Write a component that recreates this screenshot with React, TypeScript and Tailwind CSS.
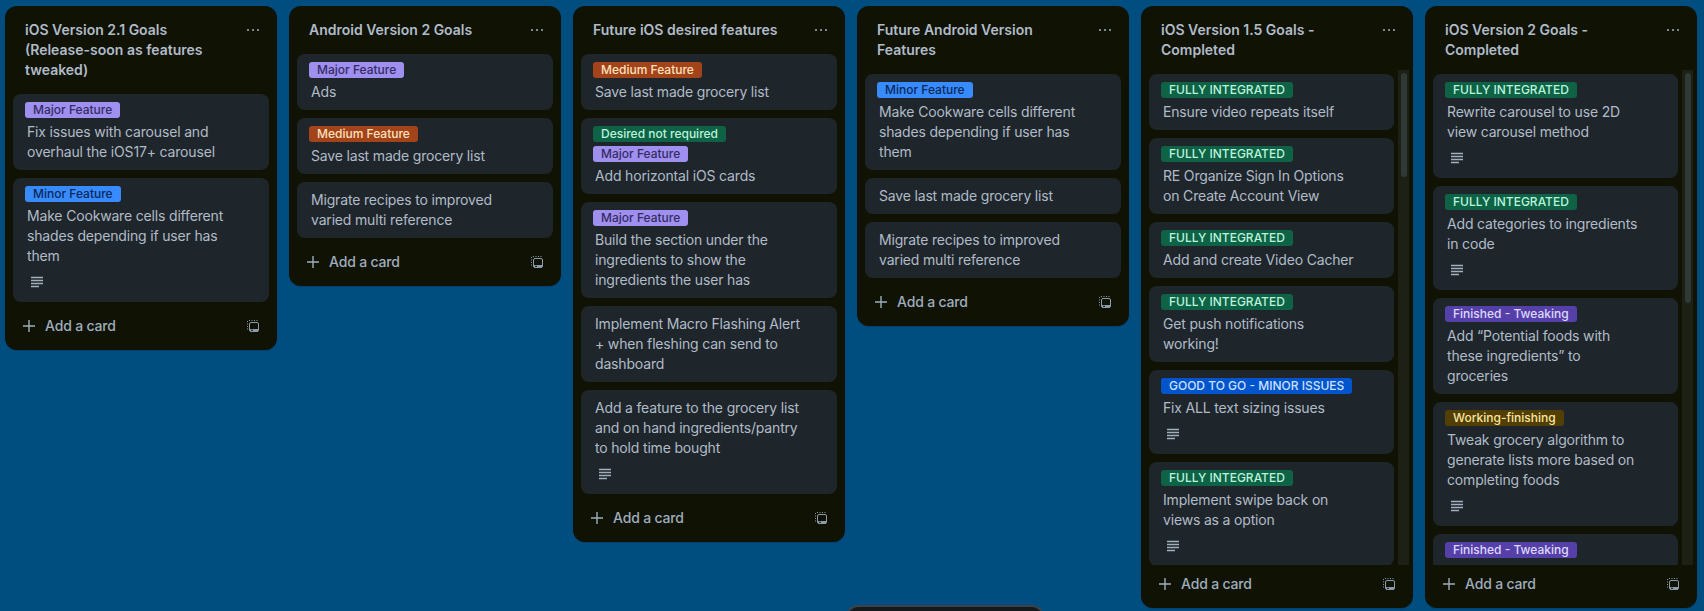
type Label = { text: string; color: string }
type Card = { labels?: Label[]; lines: string[]; desc?: boolean }
type List = { title: string[]; cards: Card[]; thumb?: string }

const major = { text: 'Major Feature', color: 'bg-[#9f8fef] text-[#352c63]' }
const minor = { text: 'Minor Feature', color: 'bg-[#388bff] text-[#092957]' }
const medium = { text: 'Medium Feature', color: 'bg-[#a3431a] text-[#ffe2bd]' }
const desired = { text: 'Desired not required', color: 'bg-[#0e6245] text-[#baf3db]' }
const full = { text: 'FULLY INTEGRATED', color: 'bg-[#0e6245] text-[#baf3db]' }
const good = { text: 'GOOD TO GO - MINOR ISSUES', color: 'bg-[#0055cc] text-[#cce0ff]' }
const tweaking = { text: 'Finished - Tweaking', color: 'bg-[#5440a8] text-[#dfd8fd]' }
const working = { text: 'Working-finishing', color: 'bg-[#533f04] text-[#f8e6a0]' }

const lists: List[] = [
  {
    title: ['iOS Version 2.1 Goals', '(Release-soon as features', 'tweaked)'],
    cards: [
      { labels: [major], lines: ['Fix issues with carousel and', 'overhaul the iOS17+ carousel'] },
      { labels: [minor], lines: ['Make Cookware cells different', 'shades depending if user has', 'them'], desc: true },
    ],
  },
  {
    title: ['Android Version 2 Goals'],
    cards: [
      { labels: [major], lines: ['Ads'] },
      { labels: [medium], lines: ['Save last made grocery list'] },
      { lines: ['Migrate recipes to improved', 'varied multi reference'] },
    ],
  },
  {
    title: ['Future iOS desired features'],
    cards: [
      { labels: [medium], lines: ['Save last made grocery list'] },
      { labels: [desired, major], lines: ['Add horizontal iOS cards'] },
      { labels: [major], lines: ['Build the section under the', 'ingredients to show the', 'ingredients the user has'] },
      { lines: ['Implement Macro Flashing Alert', '+ when fleshing can send to', 'dashboard'] },
      { lines: ['Add a feature to the grocery list', 'and on hand ingredients/pantry', 'to hold time bought'], desc: true },
    ],
  },
  {
    title: ['Future Android Version', 'Features'],
    cards: [
      { labels: [minor], lines: ['Make Cookware cells different', 'shades depending if user has', 'them'] },
      { lines: ['Save last made grocery list'] },
      { lines: ['Migrate recipes to improved', 'varied multi reference'] },
    ],
  },
  {
    title: ['iOS Version 1.5 Goals -', 'Completed'],
    thumb: 'h-[104px]',
    cards: [
      { labels: [full], lines: ['Ensure video repeats itself'] },
      { labels: [full], lines: ['RE Organize Sign In Options', 'on Create Account View'] },
      { labels: [full], lines: ['Add and create Video Cacher'] },
      { labels: [full], lines: ['Get push notifications', 'working!'] },
      { labels: [good], lines: ['Fix ALL text sizing issues'], desc: true },
      { labels: [full], lines: ['Implement swipe back on', 'views as a option'], desc: true },
    ],
  },
  {
    title: ['iOS Version 2 Goals -', 'Completed'],
    thumb: 'h-[230px]',
    cards: [
      { labels: [full], lines: ['Rewrite carousel to use 2D', 'view carousel method'], desc: true },
      { labels: [full], lines: ['Add categories to ingredients', 'in code'], desc: true },
      { labels: [tweaking], lines: ['Add “Potential foods with', 'these ingredients” to', 'groceries'] },
      { labels: [working], lines: ['Tweak grocery algorithm to', 'generate lists more based on', 'completing foods'], desc: true },
      { labels: [tweaking], lines: [] },
    ],
  },
]

function DescIcon() {
  return (
    <svg width="16" height="16" viewBox="0 0 16 16" className="text-[#a3afbd]">
      <path d="M2 2.8h12v1.4H2zM2 5.8h12v1.4H2zM2 8.8h12v1.4H2zM2 11.8h8v1.4H2z" fill="currentColor" />
    </svg>
  )
}

function DotsIcon() {
  return (
    <svg width="16" height="16" viewBox="0 0 16 16" className="mt-0.5 text-[#a3afbd]">
      <circle cx="3" cy="8" r="1" fill="currentColor" />
      <circle cx="8" cy="8" r="1" fill="currentColor" />
      <circle cx="13" cy="8" r="1" fill="currentColor" />
    </svg>
  )
}

function PlusIcon() {
  return (
    <svg width="16" height="16" viewBox="0 0 16 16" fill="none">
      <path d="M8 2v12M2 8h12" stroke="currentColor" strokeWidth="1.4" />
    </svg>
  )
}

function TemplateIcon() {
  return (
    <svg width="16" height="16" viewBox="0 0 16 16" fill="none" className="text-[#8c9bab]">
      <path d="M2.5 3v1M2.5 5.5v1M2.5 8v1M2.5 10.5v1M4 2.5h1M6.5 2.5h1M9 2.5h1M11.5 2.5h1" stroke="currentColor" />
      <rect x="4.5" y="4.5" width="9" height="9" rx="1.5" stroke="currentColor" />
      <path d="M5 11h8v2.5H5z" fill="currentColor" />
      <path d="M6 12.3h2" stroke="#101204" />
    </svg>
  )
}

function CardItem({ card }: { card: Card }) {
  return (
    <div className="rounded-lg bg-[#1f262b] px-3 py-2 shrink-0">
      {card.labels && (
        <div className="flex flex-col items-start gap-1 mb-1">
          {card.labels.map(label => (
            <span key={label.text} className={`h-4 rounded-[3px] px-2 text-xs leading-4 font-medium ${label.color}`}>
              {label.text}
            </span>
          ))}
        </div>
      )}
      <div className="pl-0.5 text-sm leading-5 tracking-[-0.17px] text-[#b0bbc8]">
        {card.lines.map(line => (
          <div key={line} className="whitespace-nowrap">{line}</div>
        ))}
      </div>
      {card.desc && (
        <div className="mt-1.5 mb-0.5 pl-[4px] h-5 flex items-center">
          <DescIcon />
        </div>
      )}
    </div>
  )
}

function ListColumn({ list }: { list: List }) {
  return (
    <div className="w-[272px] shrink-0 rounded-xl bg-[#101204] flex flex-col overflow-hidden max-h-[602px] shadow-[0_1px_1px_#091e4240]">
      <div className="flex justify-between pt-[14px] pl-5 pr-4 pb-[14px]">
        <h2 className="text-sm leading-5 font-semibold text-[#b0bbc8]">
          {list.title.map(line => (
            <div key={line} className="whitespace-nowrap">{line}</div>
          ))}
        </h2>
        <DotsIcon />
      </div>

      {list.thumb ? (
        <div className="flex-1 min-h-0 flex -mt-1 pl-2 pr-1 overflow-hidden">
          <div className="flex-1 min-w-0 pt-1 flex flex-col gap-2 overflow-hidden">
            {list.cards.map((card, i) => (
              <CardItem key={i} card={card} />
            ))}
          </div>
          <div className="ml-1 w-[11px] shrink-0 bg-[#1c2015] pl-[3px] pr-[2px] pt-[3px]">
            <div className={`rounded-full bg-[#2f3a36] ${list.thumb}`} />
          </div>
        </div>
      ) : (
        <div className="px-2 flex flex-col gap-2">
          {list.cards.map((card, i) => (
            <CardItem key={i} card={card} />
          ))}
        </div>
      )}

      <div className={`flex items-center justify-between h-8 mb-2 px-4 shrink-0 text-[#9fadbc] ${list.thumb ? 'mt-[3px]' : 'mt-2'}`}>
        <div className="flex items-center gap-2 text-sm font-medium tracking-[-0.17px]">
          <PlusIcon />
          Add a card
        </div>
        <TemplateIcon />
      </div>
    </div>
  )
}

export default function App() {
  return (
    <div className="relative h-screen overflow-hidden bg-[#004d80] font-['Inter',sans-serif]">
      <div className="flex items-start gap-3 pl-[5px] pt-1.5">
        {lists.map(list => (
          <ListColumn key={list.title[0]} list={list} />
        ))}
      </div>
      {/* Floating bottom switcher, only its top edge shows */}
      <div className="absolute left-[846px] top-[605px] h-12 w-[198px] rounded-xl border-2 border-[#39424a] bg-[#161a1d]" />
    </div>
  )
}
